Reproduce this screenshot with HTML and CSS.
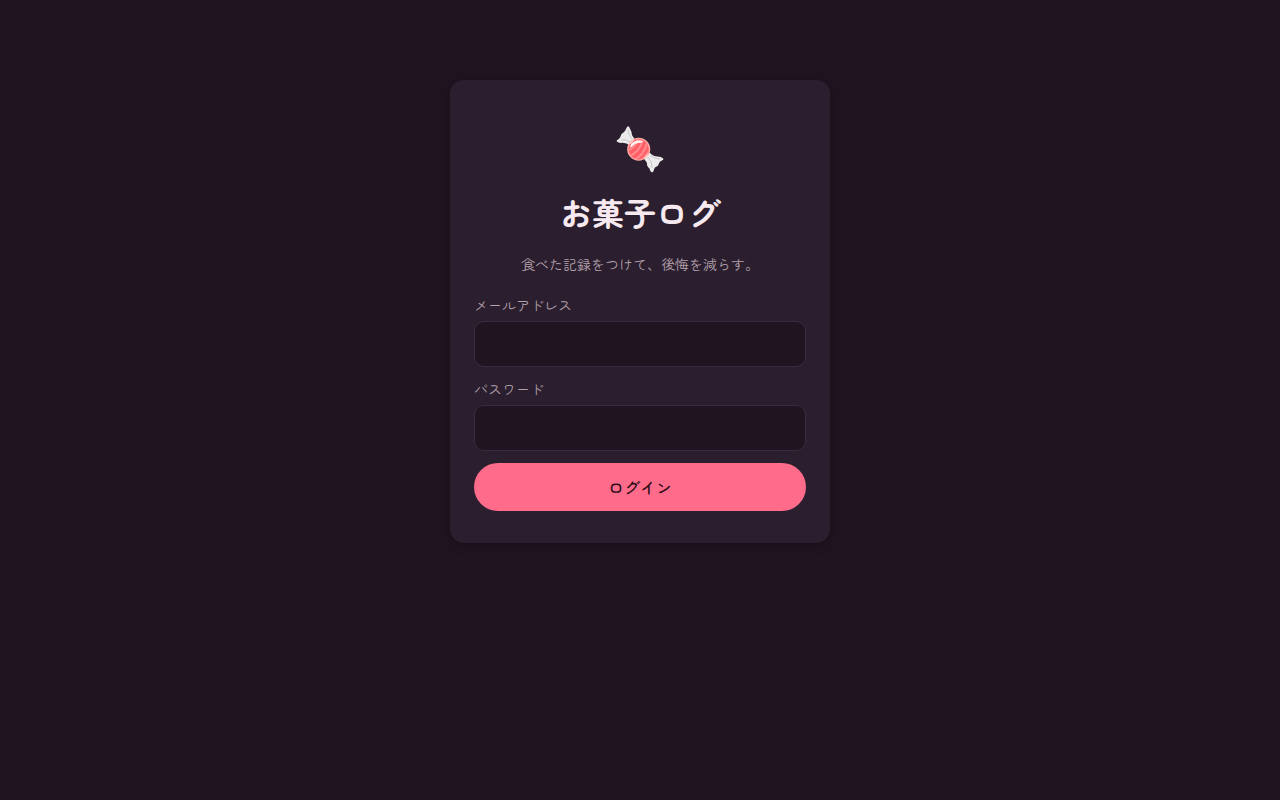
FILE: index.html
```html
<!DOCTYPE html>
<html lang="ja">
<head>
<meta charset="utf-8">
<meta name="viewport" content="width=device-width, initial-scale=1">
<title>お菓子ログ</title>
<link rel="stylesheet" href="styles.css">
</head>
<body>
<main class="page">
  <section class="card">
    <svg class="candy" viewBox="0 0 48 48" aria-hidden="true">
      <defs>
        <clipPath id="ball"><circle cx="22.7" cy="23.2" r="10.2"/></clipPath>
      </defs>
      <path d="M18 17 L14.6 20 Q10 16.500 6 16.800 Q3 17.300 .8 15.500 Q0 14.500 2 13.600 Q4 12.500 4.500 10.500 Q5 7.500 7.500 6.500 Q9 5.500 10 3 Q11 0 12.500 .3 Q13.500 1 14.500 4 Q16 6 15.700 8 Q16 10 18 12 Z" fill="#ececec"/>
      <path d="M14 16 Q9 12 5 14 M16 13 Q12 8 12 4" fill="none" stroke="#cbc8cb" stroke-width="1"/>
      <path d="M29 30.500 L33.500 26.500 Q37 30.400 41.500 30.500 Q45 30.500 47.300 32.500 Q48 34 45.500 34.800 Q43.500 35.500 43 37.500 Q42.500 40 40 40.700 Q38.500 41.500 38 43.500 Q37.500 46.500 35.700 46.200 Q34 45.500 33.500 42.500 Q30.500 40 31 37 Q30 35 28.500 33.500 Z" fill="#ececec"/>
      <path d="M32 31 Q36 35 36 42 M34 29.500 Q39 33 44 33" fill="none" stroke="#cbc8cb" stroke-width="1"/>
      <circle cx="22.700" cy="23.200" r="11.500" fill="#ffaaa6"/>
      <circle cx="22.700" cy="23.200" r="10.200" fill="#ff5f66"/>
      <g clip-path="url(#ball)" fill="none" stroke="#ff8c8f" stroke-width="2">
        <path d="M10 25 Q18 24 22 13 M12 31 Q23 27 27 14 M17 34 Q28 30 31 17 M23 35 Q32 30 34 22"/>
      </g>
      <path d="M14 20.500 Q16 14.500 23 14.300 Q27 14.500 26.500 16 Q26 17 22.500 17 Q18.500 17.500 16.500 20 Q14.500 22.500 14 20.500Z" fill="#fff1f0"/>
      <path d="M13.500 18 L17.500 14 M28 32.700 L32.500 28" stroke="#ffcdcb" stroke-width="1.500"/>
    </svg>
    <h1 class="title">お菓子ログ</h1>
    <p class="tagline">食べた記録をつけて、後悔を減らす。</p>
    <form class="form">
      <div class="field">
        <label class="label" for="email">メールアドレス</label>
        <input class="input" id="email" type="email" autocomplete="email">
      </div>
      <div class="field">
        <label class="label" for="password">パスワード</label>
        <input class="input" id="password" type="password" autocomplete="current-password">
      </div>
      <button class="submit" type="submit">ログイン</button>
    </form>
  </section>
</main>
</body>
</html>
```
FILE: styles.css
```css
* {
  box-sizing: border-box;
}

body {
  margin: 0;
  min-height: 100vh;
  background: #201420;
  color: #f7e9f0;
  font-family: "Zen Maru Gothic", "Noto Sans CJK JP", sans-serif;
}

.page {
  padding: 80px 16px;
}

.card {
  display: flex;
  flex-direction: column;
  align-items: center;
  max-width: 380px;
  margin: 0 auto;
  padding: 46px 24px 32px;
  border-radius: 14px;
  background: #2b1e2e;
  box-shadow: 0 2px 12px rgba(0, 0, 0, 0.3);
}

.candy {
  width: 48px;
  height: 48px;
}

.title {
  margin: 14px 0 16px;
  font-size: 32px;
  line-height: 48px;
  font-weight: 700;
}

.tagline {
  margin: 0 0 19px;
  color: #b3a1ac;
  font-size: 14px;
  line-height: 24px;
  font-weight: 400;
}

.form {
  display: flex;
  flex-direction: column;
  gap: 12px;
  width: 100%;
}

.field {
  display: flex;
  flex-direction: column;
  gap: 6px;
}

.label {
  color: #b3a1ac;
  font-size: 14px;
  line-height: 20px;
  font-weight: 400;
}

.input {
  width: 100%;
  height: 46px;
  padding: 10px 12px;
  border: 1px solid #3b2b3e;
  border-radius: 10px;
  background: #201420;
  color: inherit;
  font: inherit;
}

.submit {
  height: 48px;
  border: 0;
  border-radius: 24px;
  background: #ff6b8b;
  color: #2a0a14;
  font: inherit;
  font-size: 16px;
  font-weight: 500;
}
```
